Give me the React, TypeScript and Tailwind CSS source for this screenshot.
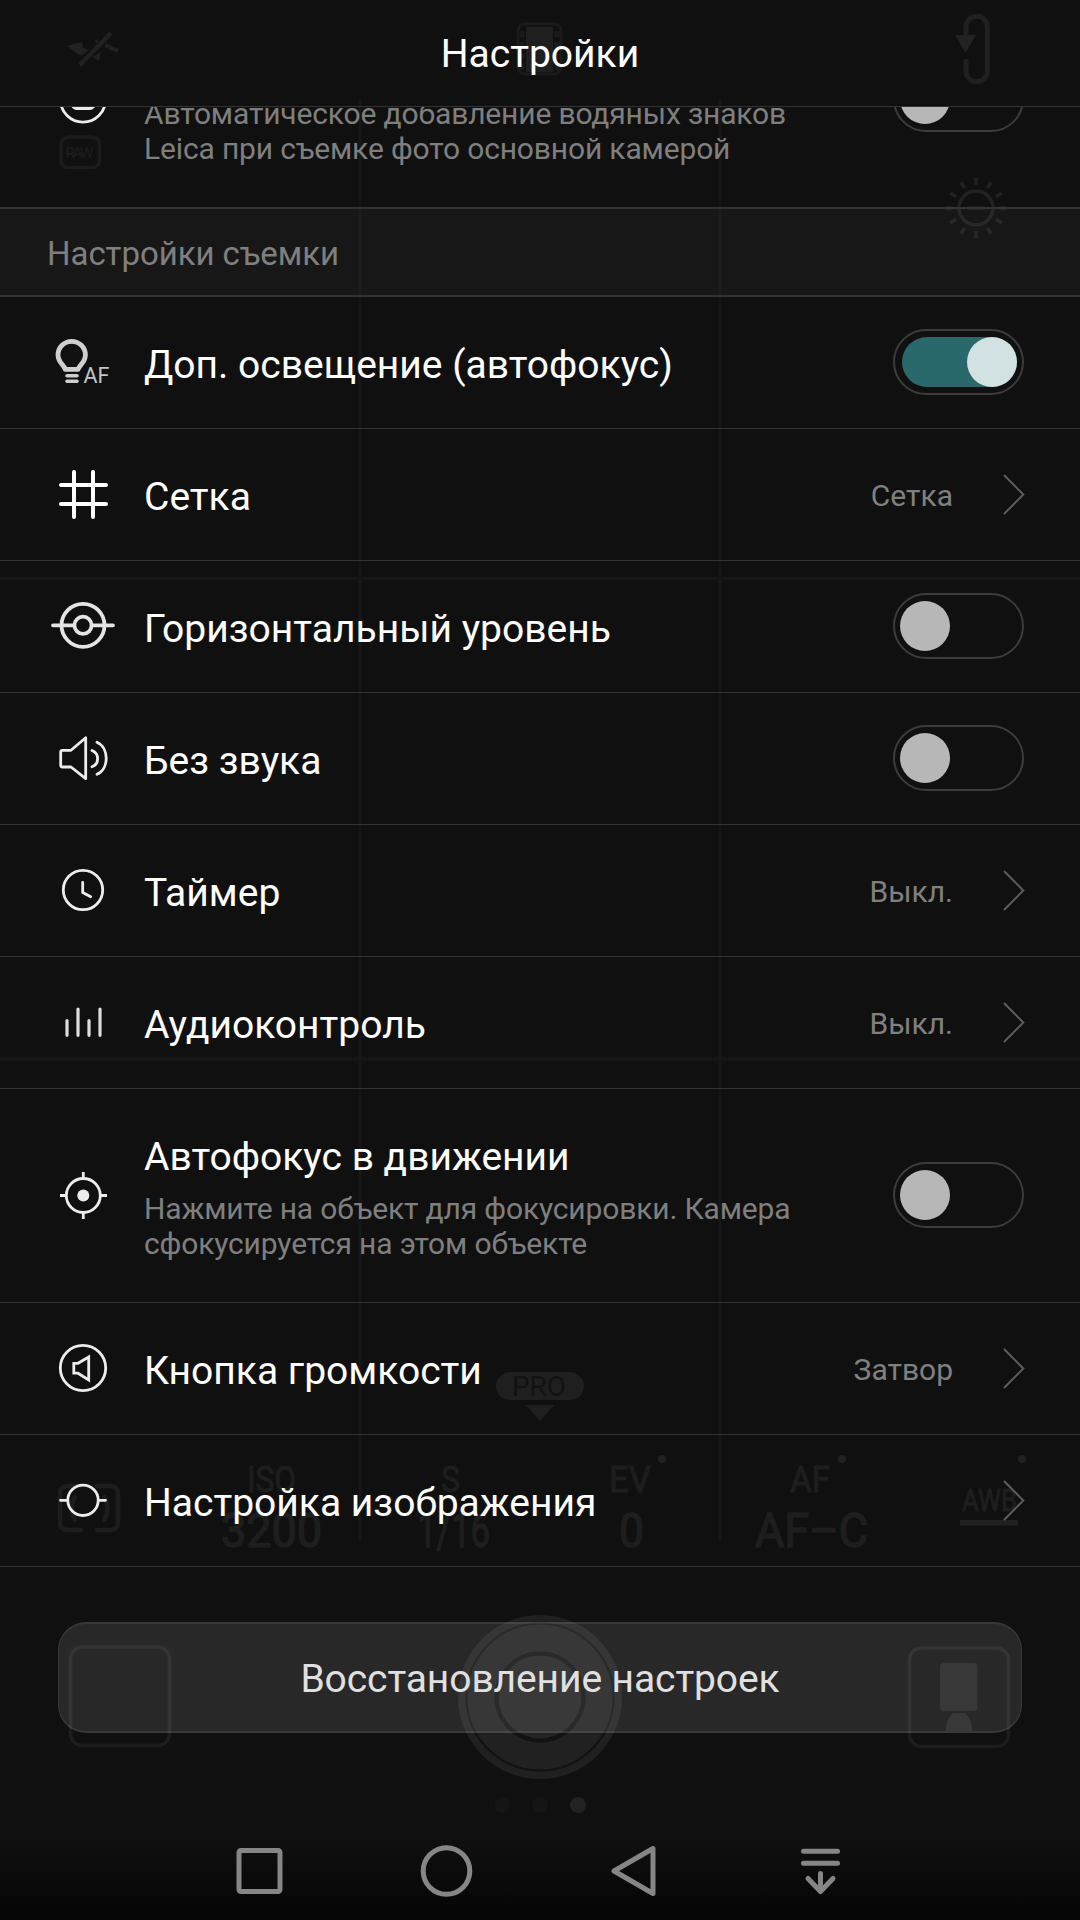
import type { ReactNode } from "react";

type Setting = {
  title: string;
  description?: string;
  icon: ReactNode;
  value?: string;
  toggle?: "on" | "off";
};

const stroke = {
  fill: "none",
  strokeLinecap: "round",
  strokeLinejoin: "round",
} as const;

const Icon = ({ children }: { children: ReactNode }) => (
  <svg
    viewBox="0 0 72 71"
    className="ml-[47px] h-[71px] w-[72px] shrink-0"
    stroke="#ececec"
    strokeWidth={2.8}
    {...stroke}
  >
    {children}
  </svg>
);

const WatermarkIcon = () => (
  <Icon>
    <circle cx="36" cy="34.5" r="22.6" />
    <rect x="25.5" y="24" width="21.5" height="19.5" rx="4" />
  </Icon>
);

const BulbIcon = () => (
  <Icon>
    <g stroke="#cfcfcf">
      <path
        d="M18.2 42.3C17.2 38 11 35.500 11 28a13.700 13.700 0 0 1 27.400 0c0 7.500-6.200 10-7.200 14.300z"
        strokeWidth="4.8"
      />
      <path d="M20 48.7h10M20 54.3h10" strokeWidth="3.600" />
    </g>
    <text
      x="36.5"
      y="55.8"
      fill="#c4c4c4"
      stroke="none"
      fontSize="21.5"
      fontFamily="Roboto, sans-serif"
    >
      AF
    </text>
  </Icon>
);

const GridIcon = () => (
  <Icon>
    <path
      d="M27 13v45M46 13v45M14 26h45M14 45h45"
      stroke="#ffffff"
      strokeWidth="4"
    />
  </Icon>
);

const LevelIcon = () => (
  <Icon>
    <g stroke="#e4e4e4" strokeWidth="3.8">
      <circle cx="36" cy="34.3" r="21.5" />
      <circle cx="36" cy="34.3" r="8.6" />
      <path d="M6 34.300h20M46 34.300h20" />
    </g>
  </Icon>
);

const SoundIcon = () => (
  <Icon>
    <path d="M13.7 29q0-1.7 1.7-1.7H24L38.7 14.7v41L24 44h-8.600q-1.700 0-1.700-1.700z" />
    <path d="M45 27.5c7.500 3 7.500 13.500 0 16.200M50 19.300c12.300 5.500 12.300 26.500 0 32" />
  </Icon>
);

const TimerIcon = () => (
  <Icon>
    <circle cx="36" cy="35" r="19.7" />
    <path d="M35.7 27.5v10l8 4.2" />
  </Icon>
);

const AudioIcon = () => (
  <Icon>
    <path
      d="M20 33.5v14.8M31 22v26.3M42 33.5v14.8M53 22v26.3"
      stroke="#dedede"
      strokeWidth="3.2"
    />
  </Icon>
);

const FocusIcon = () => (
  <Icon>
    <circle cx="36.3" cy="35.5" r="17" />
    <circle cx="36.3" cy="35.5" r="6" fill="#ececec" stroke="none" />
    <path
      d="M36.3 12v6M36.3 53v6M13 35.5h6M54 35.5h6"
      strokeLinecap="butt"
    />
  </Icon>
);

const VolumeKeyIcon = () => (
  <Icon>
    <circle cx="36" cy="35" r="22.7" />
    <path d="M26.8 30.3H31L41.7 24v23L31 40.2h-4.200z" strokeLinejoin="miter" />
  </Icon>
);

const ImageIcon = () => (
  <Icon>
    <circle cx="36" cy="35.3" r="15.2" />
    <path d="M13.5 35.3h7M51.5 35.3h7" />
  </Icon>
);

const settings: Setting[] = [
  { title: "Доп. освещение (автофокус)", icon: <BulbIcon />, toggle: "on" },
  { title: "Сетка", icon: <GridIcon />, value: "Сетка" },
  { title: "Горизонтальный уровень", icon: <LevelIcon />, toggle: "off" },
  { title: "Без звука", icon: <SoundIcon />, toggle: "off" },
  { title: "Таймер", icon: <TimerIcon />, value: "Выкл." },
  { title: "Аудиоконтроль", icon: <AudioIcon />, value: "Выкл." },
  {
    title: "Автофокус в движении",
    description:
      "Нажмите на объект для фокусировки. Камера сфокусируется на этом объекте",
    icon: <FocusIcon />,
    toggle: "off",
  },
  { title: "Кнопка громкости", icon: <VolumeKeyIcon />, value: "Затвор" },
  { title: "Настройка изображения", icon: <ImageIcon />, value: "" },
];

const Toggle = ({ on }: { on: boolean }) => (
  <div className="mr-[56px] mb-[2px] flex h-[66px] w-[131px] shrink-0 items-center rounded-full border-2 border-[#3c3c3c] px-[5px]">
    {on ? (
      <div className="ml-[2px] flex h-[50px] w-full justify-end rounded-full bg-[#2a696b]">
        <div className="h-[50px] w-[50px] rounded-full bg-[#d2e1e1]" />
      </div>
    ) : (
      <div className="h-[50px] w-[50px] rounded-full bg-[#b7b7b7]" />
    )}
  </div>
);

const Chevron = () => (
  <svg
    viewBox="0 0 22 41"
    className="mr-[55px] ml-[50px] h-[41px] w-[22px] shrink-0"
    stroke="#5c5c5c"
    strokeWidth={2}
    fill="none"
  >
    <path d="M1 1l19.300 19.500L1 40" />
  </svg>
);

const Description = ({ children }: { children: ReactNode }) => (
  <p className="w-[680px] text-[30px] leading-[35px] tracking-[-0.15px] text-[#7f7f7f]">
    {children}
  </p>
);

const SettingRow = ({ title, description, icon, value, toggle }: Setting) => (
  <div
    className={`flex items-center border-b border-[#333333] ${
      description ? "h-[214px]" : "h-[132px]"
    }`}
  >
    {icon}
    <div className="ml-[25px] flex-1 pt-1 whitespace-nowrap">
      <h2 className="text-[39px] leading-[46px] text-white">{title}</h2>
      {description && (
        <div className="mt-[11px] whitespace-normal">
          <Description>{description}</Description>
        </div>
      )}
    </div>
    {toggle && <Toggle on={toggle === "on"} />}
    {value !== undefined && (
      <>
        <span className="pt-[2px] text-[30px] text-[#808080]">{value}</span>
        <Chevron />
      </>
    )}
  </div>
);

/* Dimmed camera screen that shows through the settings panel */
const Viewfinder = () => (
  <svg
    viewBox="0 0 1080 1920"
    className="absolute inset-0 h-[1920px] w-[1080px]"
    fontFamily="Roboto, sans-serif"
    aria-hidden="true"
  >
    <g stroke="#171717" strokeWidth="3">
      <path d="M360 100v1440M720 100v1440M0 578.5h1080M0 1059h1080" />
    </g>

    <g fill="#212121">
      <path d="M67 46l15-4 1 6 6 2-8 6z" />
      <path d="M92 57l9-5-2 9zM94 41l4-2v5z" />
    </g>
    <path d="M80 65l31-32M105 45l13 6" stroke="#212121" strokeWidth="4.5" />

    <rect x="518" y="24" width="43" height="50" rx="7" fill="none" stroke="#1a1a1a" strokeWidth="3" />
    <rect x="526" y="27" width="27" height="45" fill="#1f1f1f" />
    <path d="M522 31v40M557 31v40" stroke="#1a1a1a" strokeWidth="5" strokeDasharray="6 5" />

    <g stroke="#202020" strokeWidth="5" {...stroke}>
      <path d="M966 61v10a10.700 10.700 0 0 0 21.400 0V27a10.700 10.700 0 0 0-21.400 0v10" />
    </g>
    <path d="M955 35h21l-10.500 18z" fill="#222222" />

    <rect x="61" y="137" width="38.5" height="30.5" rx="7" fill="none" stroke="#1b1b1b" strokeWidth="3.5" />
    <text x="65.5" y="157.5" fontSize="15.5" textLength="28" fill="#1d1d1d">
      RAW
    </text>

    <g stroke="#222222" strokeWidth="3.5" fill="none">
      <circle cx="976" cy="208" r="17" />
      {Array.from({ length: 12 }, (_, i) => (
        <path key={i} d="M976 185v-7" transform={`rotate(${i * 30} 976 208)`} />
      ))}
      <path d="M968 208h16" />
    </g>

    <rect x="496" y="1372" width="88" height="28" rx="14" fill="#1f1f1f" />
    <text x="512" y="1396" fontSize="28" textLength="54" fill="#121212" lengthAdjust="spacingAndGlyphs">
      PRO
    </text>
    <path d="M526 1405h28l-14 16z" fill="#1f1f1f" />

    <g fill="#1e1e1e" stroke="#1e1e1e">
      <g fontSize="36" strokeWidth="1">
        <text x="247" y="1491.5" textLength="49" lengthAdjust="spacingAndGlyphs">ISO</text>
        <text x="441" y="1491.5" textLength="19" lengthAdjust="spacingAndGlyphs">S</text>
        <text x="609" y="1491.5" textLength="42" lengthAdjust="spacingAndGlyphs">EV</text>
        <text x="790" y="1491.5" textLength="40" lengthAdjust="spacingAndGlyphs">AF</text>
      </g>
      <g fontSize="49" strokeWidth="1.5">
        <text x="221" y="1547" textLength="101" lengthAdjust="spacingAndGlyphs">3200</text>
        <text x="417" y="1547" textLength="73" lengthAdjust="spacingAndGlyphs">1/16</text>
        <text x="619" y="1547" textLength="25" lengthAdjust="spacingAndGlyphs">0</text>
        <text x="755" y="1547" textLength="113" lengthAdjust="spacingAndGlyphs">AF–C</text>
      </g>
      <text x="962" y="1511" fontSize="31" textLength="55" lengthAdjust="spacingAndGlyphs" strokeWidth="1">
        AWB
      </text>
    </g>
    <g fill="#202020">
      <circle cx="662" cy="1459" r="4.2" />
      <circle cx="842" cy="1459" r="4.2" />
      <circle cx="1022" cy="1459" r="4.2" />
      <rect x="960" y="1520" width="58" height="5.5" />
    </g>

    <g stroke="#1d1d1d" strokeWidth="4.5" {...stroke}>
      <path d="M81 1486H68q-8 0-8 8v28q0 8 8 8h13M97 1486h13q8 0 8 8v28q0 8-8 8H97" />
      <path d="M75 1497q-7 11 0 23M104 1497q7 11 0 23" />
    </g>

    <circle cx="540" cy="1697" r="82" fill="#202020" />
    <circle cx="540" cy="1697" r="73.5" fill="#212121" stroke="#121212" strokeWidth="2" />
    <circle cx="540" cy="1697" r="43.5" fill="#232323" stroke="#121212" strokeWidth="4" />

    <g fill="none" stroke="#1d1d1d" strokeWidth="3.5">
      <rect x="70.5" y="1647" width="99" height="98.5" rx="12" />
      <rect x="909.5" y="1648" width="99" height="98.5" rx="12" />
    </g>
    <g fill="#222222">
      <rect x="940" y="1663" width="37.5" height="48" rx="4" />
      <path d="M946 1731q-1-11 7-18h12q8 7 7 18z" />
    </g>

    <circle cx="502" cy="1805" r="8" fill="#151515" />
    <circle cx="540" cy="1805" r="8" fill="#151515" />
    <circle cx="578" cy="1805" r="8" fill="#222222" />
  </svg>
);

const NavBar = () => (
  <nav className="mt-auto flex h-[98px] justify-center bg-linear-to-b from-transparent from-15% to-[#050505] stroke-[#868686] stroke-5">
    <svg viewBox="-93.5 -49 187 98" className="h-[98px] w-[187px]" fill="none">
      <rect x="-20.5" y="-20.5" width="41" height="41" rx="2" />
    </svg>
    <svg viewBox="-93.5 -49 187 98" className="h-[98px] w-[187px]" fill="none">
      <circle r="23.3" />
    </svg>
    <svg viewBox="-93.5 -49 187 98" className="h-[98px] w-[187px]" {...stroke}>
      <path d="M19.5-22.500v45L-19.500 0z" />
    </svg>
    <svg viewBox="-93.5 -49 187 98" className="h-[98px] w-[187px]" {...stroke}>
      <path d="M-17-19.700h34M-17-7.700h34M0 2.500v18M-12.500 7.500L0 20.500 12.500 7.500" />
    </svg>
  </nav>
);

export default function App() {
  return (
    <div className="relative h-[1920px] w-[1080px] overflow-hidden bg-[#101010] font-['Roboto','Noto_Sans',sans-serif]">
      <Viewfinder />
      <div className="relative flex h-full flex-col">
        <header className="flex h-[107px] items-center justify-center border-b border-[#333333] pt-[2px]">
          <h1 className="text-[39px] text-white">Настройки</h1>
        </header>

        <main>
          {/* Row scrolled half way under the header */}
          <div className="h-[100px] overflow-hidden">
            <div className="-mt-[114px] flex h-[214px] items-center">
              <WatermarkIcon />
              <div className="ml-[25px] flex-1 pt-[62px]">
                <Description>
                  Автоматическое добавление водяных знаков Leica при съемке фото
                  основной камерой
                </Description>
              </div>
              <Toggle on={false} />
            </div>
          </div>

          <div className="flex h-[90px] items-center border-y-2 border-[#343434] bg-white/3 pt-1 pl-[47px] text-[33px] tracking-[-0.05px] text-[#7f7f7f]">
            Настройки съемки
          </div>

          {settings.map((setting) => (
            <SettingRow key={setting.title} {...setting} />
          ))}
        </main>

        <button className="mx-[58px] mt-[55px] h-[111px] rounded-[28px] border-x border-y-2 border-white/8 bg-white/10 pt-1 text-[39px] tracking-[-0.1px] text-[#e0e0e0]">
          Восстановление настроек
        </button>

        <NavBar />
      </div>
    </div>
  );
}
